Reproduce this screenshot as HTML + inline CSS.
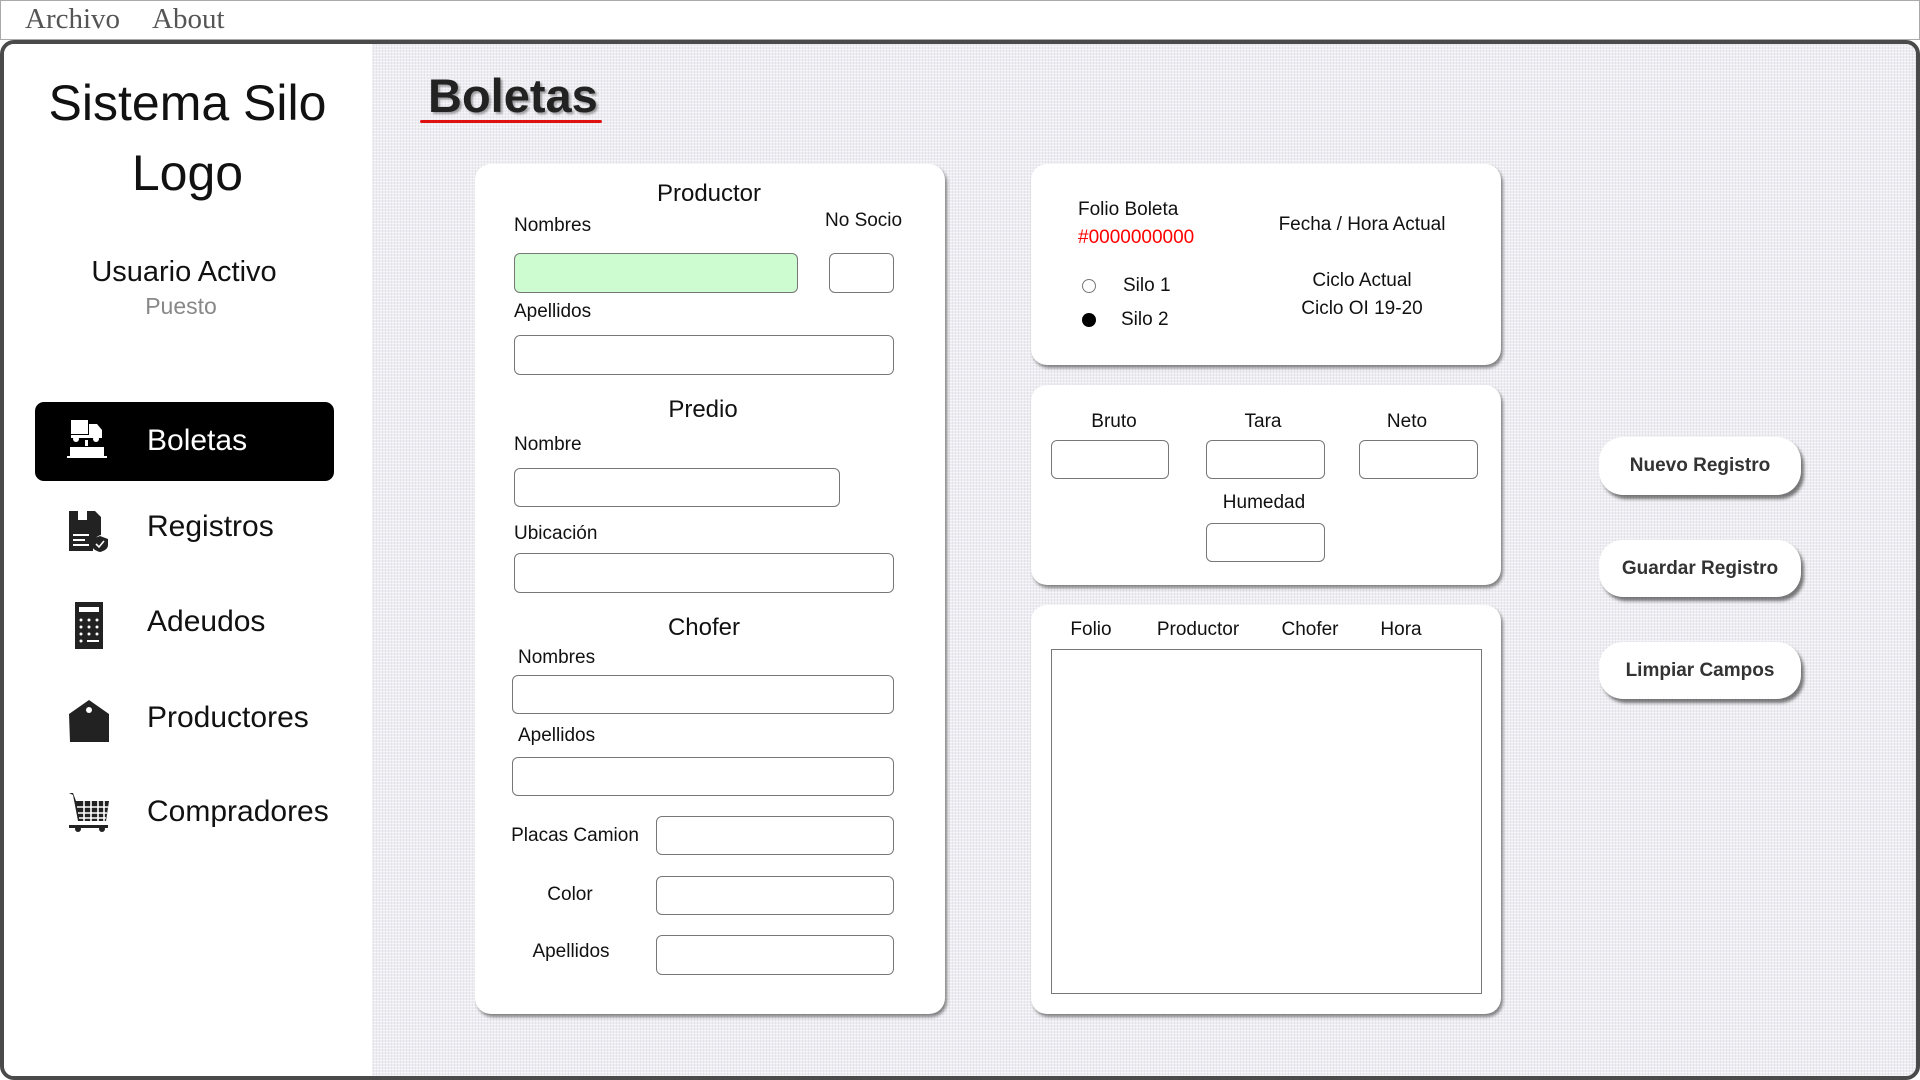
<!DOCTYPE html>
<html><head><meta charset="utf-8"><style>
*{margin:0;padding:0;box-sizing:border-box}
body{width:1920px;height:1080px;overflow:hidden;background:#fff;font-family:"Liberation Sans",sans-serif;color:#111;position:relative}
.a{position:absolute;white-space:nowrap;line-height:1}
.c{text-align:center}
.menu{left:0;top:0;width:1920px;height:40px;border:1px solid #aaa;background:#fff}
.frame{left:0;top:40px;width:1920px;height:1040px;border:4px solid #4a4a4a;border-radius:14px;overflow:hidden;background-color:#eeeef2;
background-image:repeating-linear-gradient(0deg,rgba(255,255,255,.5) 0 1px,transparent 1px 3px),repeating-linear-gradient(90deg,rgba(200,200,215,.35) 0 1px,transparent 1px 3px)}
.side{left:0;top:0;width:368px;height:1040px;background:#fff}
.panel{background:#fff;border-radius:16px;box-shadow:2px 3px 3px rgba(0,0,0,.45)}
.in{position:absolute;border:1.5px solid #777;border-radius:6px;background:#fff}
.lb{font-size:19px}
.btn{position:absolute;background:#fff;border-radius:24px;box-shadow:3px 4px 3px rgba(0,0,0,.5);font-size:19px;font-weight:bold;text-align:center;color:#333}
.nav{font-size:30px;color:#111}
</style></head><body>
<div class="a menu"></div>
<div class="a" style="left:25px;top:5px;font-family:'Liberation Serif',serif;font-size:29px;color:#555">Archivo</div>
<div class="a" style="left:152px;top:5px;font-family:'Liberation Serif',serif;font-size:29px;color:#555">About</div>

<div class="a frame">
  <div class="a side"></div>
</div>

<!-- sidebar -->
<div class="a c" style="left:0;width:375px;top:78px;font-size:50px">Sistema Silo</div>
<div class="a c" style="left:0;width:375px;top:148px;font-size:50px">Logo</div>
<div class="a c" style="left:0;width:368px;top:258px;font-size:29px">Usuario Activo</div>
<div class="a c" style="left:0;width:362px;top:295px;font-size:23px;color:#888">Puesto</div>

<div class="a" style="left:35px;top:402px;width:299px;height:79px;background:#000;border-radius:9px"></div>
<svg class="a" style="left:66px;top:418px" width="44" height="42" viewBox="0 0 44 42">
<rect x="5" y="2" width="17" height="14" fill="#fff"/><path d="M23 6h8l5 6v6H23z" fill="#fff"/><rect x="5" y="17" width="31" height="3" fill="#fff"/>
<circle cx="10" cy="21" r="3" fill="#fff"/><circle cx="30" cy="21" r="3" fill="#fff"/><rect x="19" y="22" width="3" height="6" fill="#fff"/>
<rect x="4" y="29" width="34" height="9" fill="#fff"/><rect x="1" y="38" width="40" height="2" fill="#fff"/></svg>
<div class="a nav" style="left:147px;top:426px;color:#fff">Boletas</div>

<svg class="a" style="left:68px;top:510px" width="42" height="42" viewBox="0 0 42 42">
<path d="M1 1h26l6 6v18a10 10 0 0 0-8 10v6H1z" fill="#222"/><rect x="10" y="1" width="9" height="9" fill="#fff"/>
<rect x="5" y="24" width="16" height="2" fill="#fff"/><rect x="5" y="29" width="12" height="2" fill="#fff"/><rect x="5" y="34" width="16" height="2" fill="#fff"/>
<path d="M32 26l8 3v6c0 4-4 6-8 7-4-1-8-3-8-7v-6z" fill="#222"/><path d="M28 34l3 3 5-6" stroke="#fff" stroke-width="1.6" fill="none"/></svg>
<div class="a nav" style="left:147px;top:512px">Registros</div>

<svg class="a" style="left:75px;top:602px" width="30" height="48" viewBox="0 0 30 48">
<rect x="0" y="0" width="28" height="47" fill="#222"/><rect x="4" y="5" width="20" height="5" fill="#fff"/>
<g fill="#fff"><circle cx="6" cy="18" r="1.5"/><circle cx="14" cy="18" r="1.5"/><circle cx="22" cy="18" r="1.5"/><circle cx="6" cy="25" r="1.5"/><circle cx="14" cy="25" r="1.5"/><circle cx="22" cy="25" r="1.5"/><circle cx="6" cy="32" r="1.5"/><circle cx="14" cy="32" r="1.5"/><circle cx="22" cy="32" r="1.5"/><circle cx="6" cy="39" r="1.5"/><rect x="12" y="38" width="12" height="2"/></g></svg>
<div class="a nav" style="left:147px;top:607px">Adeudos</div>

<svg class="a" style="left:68px;top:700px" width="42" height="42" viewBox="0 0 42 42">
<path d="M1 14L21 0l20 14v28H2z" fill="#222"/><circle cx="21" cy="10" r="3" fill="#fff"/></svg>
<div class="a nav" style="left:147px;top:703px">Productores</div>

<svg class="a" style="left:68px;top:792px" width="42" height="42" viewBox="0 0 42 42">
<path d="M1 1h4l3 8h33l-3 20H10L5 3" fill="#222"/>
<g stroke="#fff" stroke-width="1.6"><path d="M9 15h31M10 21h29M11 26h27M16 9v20M23 9v20M30 9v20M36 9v20"/></g>
<rect x="1" y="33" width="39" height="3" fill="#222"/><circle cx="10" cy="37" r="3" fill="#222"/><circle cx="34" cy="37" r="3" fill="#222"/></svg>
<div class="a nav" style="left:147px;top:797px">Compradores</div>

<!-- title -->
<div class="a" style="left:428px;top:72px;font-size:47px;font-weight:bold;color:#222;text-shadow:2px 2px 2px rgba(0,0,0,.35)">Boletas</div>
<div class="a" style="left:420px;top:120px;width:182px;height:3px;background:#e01010;border-radius:2px"></div>

<!-- panel 1 -->
<div class="a panel" style="left:475px;top:164px;width:470px;height:850px"></div>
<div class="a c" style="left:509px;width:400px;top:182px;font-size:24px">Productor</div>
<div class="a lb" style="left:514px;top:216px">Nombres</div>
<div class="a lb" style="left:825px;top:211px">No Socio</div>
<div class="in" style="left:514px;top:253px;width:284px;height:40px;background:#ccfcd0"></div>
<div class="in" style="left:829px;top:253px;width:65px;height:40px"></div>
<div class="a lb" style="left:514px;top:302px">Apellidos</div>
<div class="in" style="left:514px;top:335px;width:380px;height:40px"></div>
<div class="a c" style="left:503px;width:400px;top:398px;font-size:24px">Predio</div>
<div class="a lb" style="left:514px;top:435px">Nombre</div>
<div class="in" style="left:514px;top:468px;width:326px;height:39px"></div>
<div class="a lb" style="left:514px;top:524px">Ubicación</div>
<div class="in" style="left:514px;top:553px;width:380px;height:40px"></div>
<div class="a c" style="left:504px;width:400px;top:616px;font-size:24px">Chofer</div>
<div class="a lb" style="left:518px;top:648px">Nombres</div>
<div class="in" style="left:512px;top:675px;width:382px;height:39px"></div>
<div class="a lb" style="left:518px;top:726px">Apellidos</div>
<div class="in" style="left:512px;top:757px;width:382px;height:39px"></div>
<div class="a lb c" style="left:475px;width:200px;top:826px">Placas Camion</div>
<div class="in" style="left:656px;top:816px;width:238px;height:39px"></div>
<div class="a lb c" style="left:470px;width:200px;top:885px">Color</div>
<div class="in" style="left:656px;top:876px;width:238px;height:39px"></div>
<div class="a lb c" style="left:471px;width:200px;top:942px">Apellidos</div>
<div class="in" style="left:656px;top:935px;width:238px;height:40px"></div>

<!-- panel 2 -->
<div class="a panel" style="left:1031px;top:164px;width:470px;height:201px"></div>
<div class="a lb" style="left:1078px;top:200px">Folio Boleta</div>
<div class="a lb" style="left:1078px;top:228px;color:#f00">#0000000000</div>
<div class="a lb c" style="left:1212px;width:300px;top:215px">Fecha / Hora Actual</div>
<div class="a" style="left:1082px;top:279px;width:14px;height:14px;border:1px solid #777;border-radius:50%"></div>
<div class="a lb" style="left:1123px;top:276px">Silo 1</div>
<div class="a" style="left:1082px;top:313px;width:14px;height:14px;background:#000;border-radius:50%"></div>
<div class="a lb" style="left:1121px;top:310px">Silo 2</div>
<div class="a lb c" style="left:1212px;width:300px;top:271px">Ciclo Actual</div>
<div class="a lb c" style="left:1212px;width:300px;top:299px">Ciclo OI 19-20</div>

<!-- panel 3 -->
<div class="a panel" style="left:1031px;top:385px;width:470px;height:200px"></div>
<div class="a lb c" style="left:1014px;width:200px;top:412px">Bruto</div>
<div class="a lb c" style="left:1163px;width:200px;top:412px">Tara</div>
<div class="a lb c" style="left:1307px;width:200px;top:412px">Neto</div>
<div class="in" style="left:1051px;top:440px;width:118px;height:39px"></div>
<div class="in" style="left:1206px;top:440px;width:119px;height:39px"></div>
<div class="in" style="left:1359px;top:440px;width:119px;height:39px"></div>
<div class="a lb c" style="left:1164px;width:200px;top:493px">Humedad</div>
<div class="in" style="left:1206px;top:523px;width:119px;height:39px"></div>

<!-- panel 4 -->
<div class="a panel" style="left:1031px;top:605px;width:470px;height:409px"></div>
<div class="a lb c" style="left:1041px;width:100px;top:620px">Folio</div>
<div class="a lb c" style="left:1138px;width:120px;top:620px">Productor</div>
<div class="a lb c" style="left:1250px;width:120px;top:620px">Chofer</div>
<div class="a lb c" style="left:1341px;width:120px;top:620px">Hora</div>
<div class="a" style="left:1051px;top:649px;width:431px;height:345px;border:1.5px solid #777;background:#fff"></div>

<!-- buttons -->
<div class="btn" style="left:1599px;top:437px;width:202px;height:58px;line-height:58px">Nuevo Registro</div>
<div class="btn" style="left:1599px;top:540px;width:202px;height:57px;line-height:57px">Guardar Registro</div>
<div class="btn" style="left:1599px;top:642px;width:202px;height:57px;line-height:57px">Limpiar Campos</div>
</body></html>
